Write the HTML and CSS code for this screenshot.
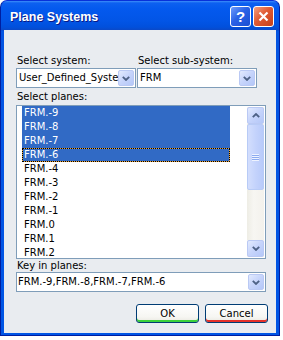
FILE: index.html
```html
<!DOCTYPE html>
<html lang="en">
<head>
    <meta charset="UTF-8">
    <title>Plane Systems</title>
    <link rel="stylesheet" href="styles.css">
</head>
<body>
    <div class="window">
        <div class="titlebar">
            <span class="title">Plane Systems</span>
            <div class="caption-buttons">
                <div class="cap-btn help">?</div>
                <div class="cap-btn close">
                    <svg width="11" height="11" viewBox="0 0 11 11"><path d="M1.5 1.5 L9.5 9.5 M9.5 1.5 L1.5 9.5" stroke="#fff" stroke-width="2.2" fill="none"/></svg>
                </div>
            </div>
        </div>

        <div class="client">
            <!-- System / sub-system pickers -->
            <div class="selects">
                <div class="field">
                    <div class="label">Select system:</div>
                    <div class="combo">
                        <span class="combo-text">User_Defined_Syste</span>
                        <span class="drop"><svg width="8" height="5" viewBox="0 0 8 5"><path d="M0.8 0.8 L4 4 L7.2 0.8" stroke="#4d6185" stroke-width="1.8" fill="none"/></svg></span>
                    </div>
                </div>
                <div class="field">
                    <div class="label">Select sub-system:</div>
                    <div class="combo">
                        <span class="combo-text">FRM</span>
                        <span class="drop"><svg width="8" height="5" viewBox="0 0 8 5"><path d="M0.8 0.8 L4 4 L7.2 0.8" stroke="#4d6185" stroke-width="1.8" fill="none"/></svg></span>
                    </div>
                </div>
            </div>

            <!-- Plane list -->
            <div class="label planes-label">Select planes:</div>
            <div class="listbox">
                <div class="items">
                    <div class="item selected">FRM.-9</div>
                    <div class="item selected">FRM.-8</div>
                    <div class="item selected">FRM.-7</div>
                    <div class="item selected focused">FRM.-6</div>
                    <div class="item">FRM.-4</div>
                    <div class="item">FRM.-3</div>
                    <div class="item">FRM.-2</div>
                    <div class="item">FRM.-1</div>
                    <div class="item">FRM.0</div>
                    <div class="item">FRM.1</div>
                    <div class="item">FRM.2</div>
                </div>
                <div class="scrollbar">
                    <div class="sb-btn"><svg width="8" height="5" viewBox="0 0 8 5"><path d="M0.8 4.2 L4 1 L7.2 4.2" stroke="#4d6185" stroke-width="1.8" fill="none"/></svg></div>
                    <div class="sb-track">
                        <div class="sb-thumb">
                            <div class="grip"></div>
                        </div>
                    </div>
                    <div class="sb-btn"><svg width="8" height="5" viewBox="0 0 8 5"><path d="M0.8 0.8 L4 4 L7.2 0.8" stroke="#4d6185" stroke-width="1.8" fill="none"/></svg></div>
                </div>
            </div>

            <!-- Typed plane list -->
            <div class="label">Key in planes:</div>
            <div class="combo keyin">
                <span class="combo-text">FRM.-9,FRM.-8,FRM.-7,FRM.-6</span>
                <span class="drop"><svg width="8" height="5" viewBox="0 0 8 5"><path d="M0.8 0.8 L4 4 L7.2 0.8" stroke="#4d6185" stroke-width="1.8" fill="none"/></svg></span>
            </div>

            <div class="actions">
                <button class="ok">OK</button>
                <button class="cancel">Cancel</button>
            </div>
        </div>
    </div>
</body>
</html>
```

FILE: styles.css
```css
body {
    margin: 0;
    background: #fff;
    font-family: "DejaVu Sans", Verdana, sans-serif;
    font-size: 10px;
    color: #000;
}

.window {
    width: 280px;
    height: 336px;
    box-sizing: border-box;
    display: flex;
    flex-direction: column;
    border: 1px solid #001ea0;
    border-top-color: #0831d9;
    border-radius: 7px 7px 0 0;
    background: linear-gradient(to bottom, #3d8ffb 0px, #0d60f0 2px, #0459ee 8px, #0255e6 20px, #0150dc 26px, #0a49c8 29px, #0454e2 30px, #0055e5 100%);
}

.titlebar {
    height: 29px;
    box-sizing: border-box;
    display: flex;
    align-items: center;
    padding: 2px 5px 0 9px;
}

.title {
    flex: 1;
    color: #fff;
    font: bold 12.5px "Liberation Sans", Arial, sans-serif;
    text-shadow: 1px 1px #0a1883;
}

.caption-buttons {
    display: flex;
    gap: 2px;
}

.cap-btn {
    width: 21px;
    height: 21px;
    box-sizing: border-box;
    border: 1px solid #fff;
    border-radius: 3px;
    display: flex;
    align-items: center;
    justify-content: center;
}

.cap-btn.help {
    background: linear-gradient(135deg, #6d9bfb 0%, #2a62e6 45%, #1a4ed2 100%);
    color: #fff;
    font: bold 15px "Liberation Sans", Arial, sans-serif;
}

.cap-btn.close {
    background: linear-gradient(135deg, #f3a080 0%, #e05a33 45%, #c6401b 100%);
}

.client {
    flex: 1;
    margin: 0 3px 2px;
    background: #e9ecf0;
    padding: 24px 8px 0 12px;
}

.selects {
    display: flex;
    gap: 1px;
}

.field {
    width: 120px;
}

.label {
    line-height: 13px;
    padding-left: 1px;
    white-space: nowrap;
}

.field .label {
    margin-bottom: 1px;
}

.planes-label {
    margin-top: 2px;
    margin-bottom: 2px;
}

.combo {
    height: 20px;
    box-sizing: border-box;
    border: 1px solid #7f9db9;
    background: #fff;
    display: flex;
    align-items: center;
}

.combo-text {
    flex: 1;
    overflow: hidden;
    white-space: nowrap;
    line-height: 18px;
    padding-left: 2px;
}

.keyin {
    width: 250px;
}

.keyin .combo-text {
    padding-left: 1px;
}

.drop,
.sb-btn {
    width: 16px;
    height: 16px;
    margin-right: 1px;
    box-sizing: border-box;
    border: 1px solid #bac9f4;
    border-radius: 2px;
    background: linear-gradient(135deg, #e2eafe 0%, #c6d4fb 50%, #b4c7f8 100%);
    display: flex;
    align-items: center;
    justify-content: center;
}

.listbox {
    width: 250px;
    height: 154px;
    box-sizing: border-box;
    border: 1px solid #7f9db9;
    background: #fff;
    display: flex;
}

.items {
    flex: 1;
    padding-left: 5px;
    overflow: hidden;
}

.item {
    width: 208px;
    height: 14px;
    line-height: 14px;
    padding-left: 2px;
    box-sizing: border-box;
    white-space: nowrap;
}

.item.selected {
    background: #316ac5;
    color: #fff;
}

.item.focused {
    border: 1px dotted #000;
    line-height: 12px;
    padding-left: 1px;
    background: linear-gradient(#316ac5, #316ac5) padding-box, #e8a23a border-box;
}

.scrollbar {
    width: 17px;
    margin: 1px 1px 1px 0;
    display: flex;
    flex-direction: column;
    background: #f4f2ee;
}

.sb-btn {
    width: 17px;
    height: 17px;
    margin: 0;
}

.sb-track {
    flex: 1;
    background: linear-gradient(to right, #eeede5, #f7f6f2 40%, #f3f1ec);
}

.sb-thumb {
    height: 66px;
    box-sizing: border-box;
    border: 1px solid #b8cbf6;
    border-radius: 2px;
    background: linear-gradient(to right, #d3defd, #c4d3fc 50%, #b8cafa);
    display: flex;
    align-items: center;
    justify-content: center;
}

.grip {
    width: 7px;
    height: 7px;
    background: repeating-linear-gradient(to bottom, #eef3ff 0px, #eef3ff 1px, #8cabf0 1px, #8cabf0 2px);
}

.actions {
    display: flex;
    justify-content: flex-end;
    gap: 6px;
    margin-top: 12px;
}

button {
    width: 63px;
    height: 19px;
    padding: 0;
    border: 1px solid #003c74;
    border-radius: 3px;
    background: linear-gradient(to bottom, #ffffff, #f6f6f2 70%, #e9e8e1);
    font-family: "DejaVu Sans", Verdana, sans-serif;
    font-size: 10px;
    color: #000;
}

button.ok {
    box-shadow: inset 0 -2px 0 #3bd23b;
}

button.cancel {
    box-shadow: inset 0 -2px 0 #e5312a;
}
```
